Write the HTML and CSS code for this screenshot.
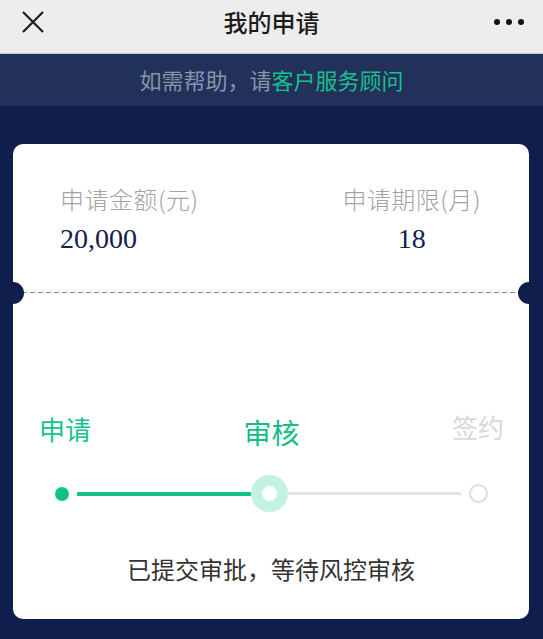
FILE: index.html
```html
<!DOCTYPE html>
<html lang="zh-CN">
<head>
    <meta charset="UTF-8" />
    <title>我的申请</title>
    <link rel="stylesheet" href="styles.css">
</head>
<body>
<div class="topbar">
    <div class="topbar-left">
        <svg width="22" height="22" viewBox="0 0 22 22">
            <path d="M1 1 L21 21 M21 1 L1 21" stroke="#1e1e1e" stroke-width="2.2" fill="none" />
        </svg>
    </div>
    <div class="topbar-title">我的申请</div>
    <div class="topbar-right">
        <svg width="30" height="8" viewBox="0 0 30 8">
            <circle cx="3" cy="4" r="3" fill="#111" />
            <circle cx="15" cy="4" r="3" fill="#111" />
            <circle cx="27" cy="4" r="3" fill="#111" />
        </svg>
    </div>
</div>

<div class="help-bar">如需帮助，请<a href="#" class="help-link">客户服务顾问</a></div>

<div class="main">
    <div class="card">
        <!-- 申请信息 -->
        <div class="info">
            <div class="info-col">
                <div class="info-label">申请金额(元)</div>
                <div class="info-value">20,000</div>
            </div>
            <div class="info-col info-col-right">
                <div class="info-label">申请期限(月)</div>
                <div class="info-value">18</div>
            </div>
        </div>

        <div class="divider"><div class="divider-line"></div></div>

        <!-- 进度 -->
        <div class="steps">
            <span class="step step-done">申请</span>
            <span class="step step-current">审核</span>
            <span class="step step-todo">签约</span>
        </div>
        <div class="progress">
            <span class="dot-done"></span>
            <span class="line line-done"></span>
            <span class="dot-current"></span>
            <span class="line line-todo"></span>
            <span class="dot-todo"></span>
        </div>

        <div class="status">已提交审批，等待风控审核</div>
    </div>
</div>
</body>
</html>
```

FILE: styles.css
```css
body {
    margin: 0;
    font-family: "Noto Sans CJK SC", "Noto Sans", sans-serif;
    background: #101e4e;
    min-height: 639px;
}
.topbar {
    display: grid;
    grid-template-columns: 1fr auto 1fr;
    align-items: center;
    height: 43px;
    padding-bottom: 10px;
    background: #ededed;
    border-bottom: 1px solid #c9c9c9;
}
.topbar-left {
    padding-left: 22px;
    display: flex;
}
.topbar-title {
    font-size: 24px;
    font-weight: 500;
    color: #1c1c1c;
    line-height: 32px;
}
.topbar-right {
    display: flex;
    justify-content: flex-end;
    padding-right: 19px;
}
.help-bar {
    height: 52px;
    line-height: 50px;
    text-align: center;
    background: #22315a;
    color: #8a93aa;
    font-size: 22px;
}
.help-link {
    color: #17c08e;
    text-decoration: none;
}
.main {
    padding: 38px 14px 0 13px;
}
.card {
    background: white;
    border-radius: 10px;
    height: 475px;
    box-sizing: border-box;
}
.info {
    display: flex;
    justify-content: space-between;
    padding: 39px 48px 35px 47px;
    height: 148px;
    box-sizing: border-box;
}
.info-col-right {
    text-align: center;
}
.info-label {
    font-size: 24px;
    line-height: 32px;
    color: #a3a3a3;
    font-weight: 300;
    letter-spacing: 0.5px;
}
.info-value {
    font-family: "Liberation Serif", serif;
    font-size: 28px;
    line-height: 34px;
    color: #13214f;
    margin-top: 7px;
}
.divider {
    position: relative;
    padding: 0 9px;
}
.divider-line {
    height: 1px;
    background: repeating-linear-gradient(to right, #7f8aa8 0 5px, transparent 5px 8px);
}
.divider::before, .divider::after {
    content: "";
    position: absolute;
    top: -10px;
    width: 22px;
    height: 22px;
    border-radius: 50%;
    background: #101e4e;
}
.divider::before {
    left: -11px;
}
.divider::after {
    right: -11px;
}
.steps {
    display: flex;
    justify-content: space-between;
    align-items: center;
    padding: 0 25px 0 26px;
    margin-top: 118px;
    height: 36px;
}
.step {
    font-size: 26px;
    line-height: 36px;
}
.step-done {
    color: #14c48c;
}
.step-current {
    color: #12bd88;
    font-size: 28px;
    padding-top: 5px;
}
.step-todo {
    color: #d9d9d9;
    margin-top: -4px;
}
.progress {
    display: flex;
    align-items: center;
    padding: 0 41px 0 42px;
    margin-top: 28px;
    height: 37px;
}
.dot-done {
    width: 14px;
    height: 14px;
    border-radius: 50%;
    background: #12c386;
    margin-right: 8px;
}
.line {
    flex: 1;
}
.line-done {
    height: 4px;
    background: #12c386;
}
.line-todo {
    height: 3px;
    background: #e3e3e3;
    margin-right: 8px;
}
.dot-current {
    width: 15px;
    height: 15px;
    border-radius: 50%;
    background: white;
    border: 11px solid #c3f2e3;
}
.dot-todo {
    width: 15px;
    height: 15px;
    border-radius: 50%;
    border: 2px solid #dedede;
}
.status {
    text-align: center;
    font-size: 24px;
    line-height: 32px;
    color: #333;
    margin-top: 41px;
}
```
